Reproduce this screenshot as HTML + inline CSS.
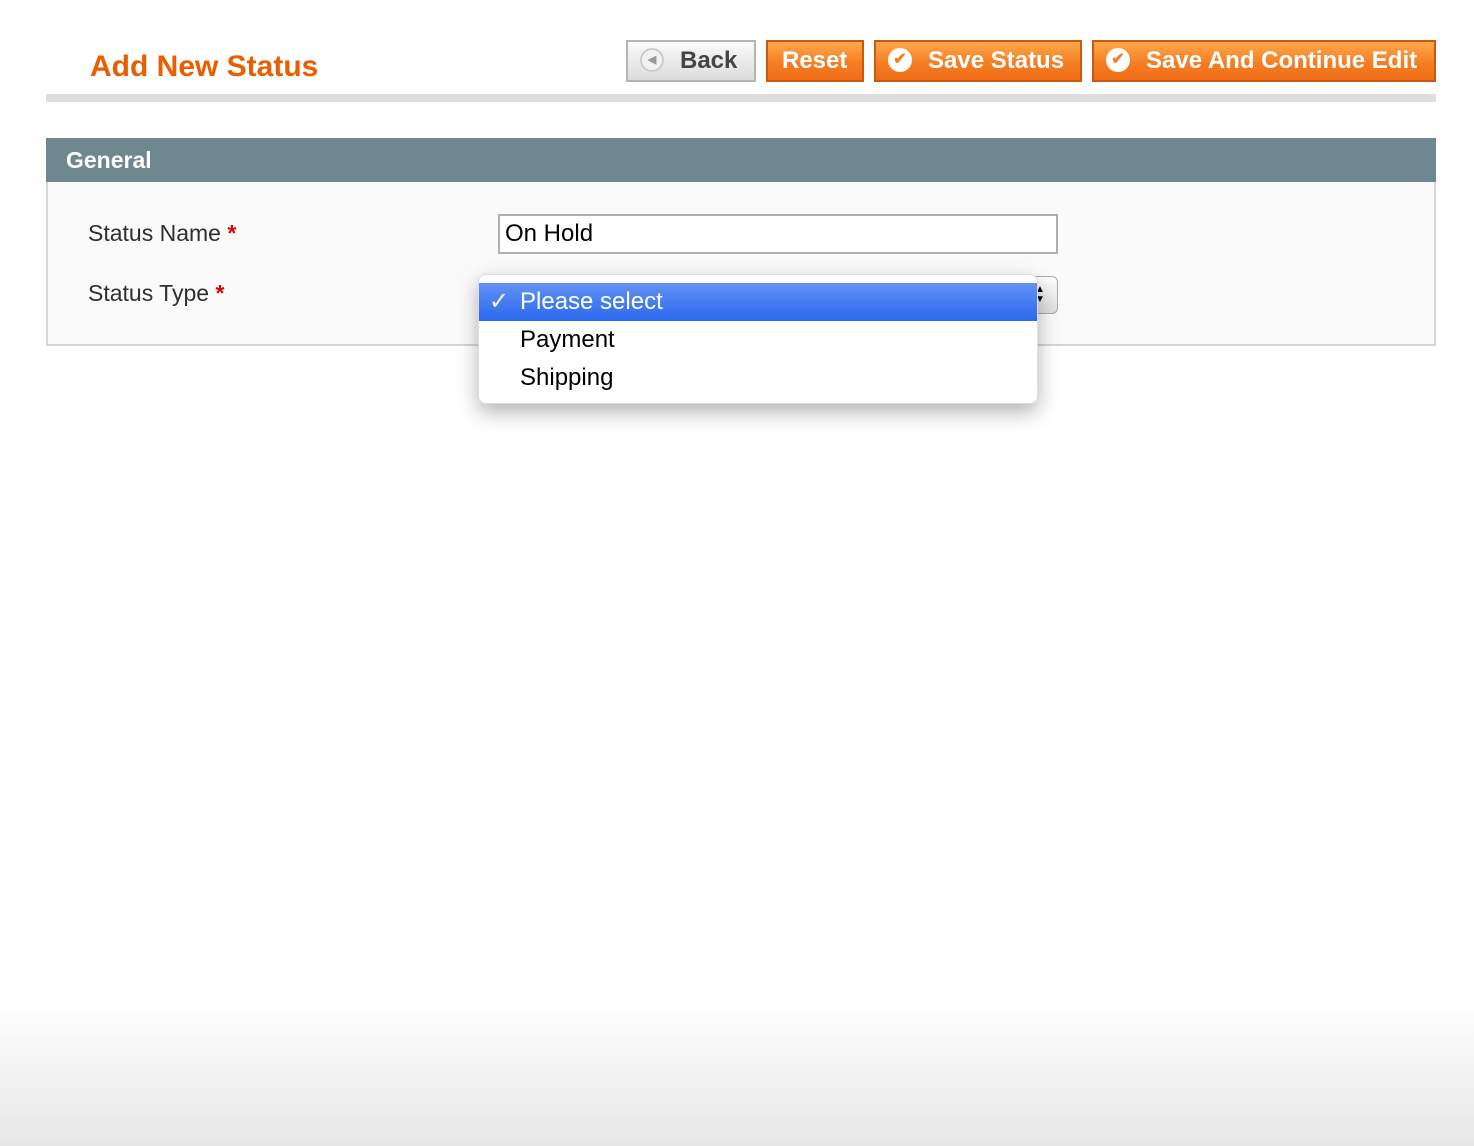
<!DOCTYPE html>
<html><head><style>
body{margin:0;width:1474px;height:1146px;position:relative;font-family:"Liberation Sans",sans-serif;background:linear-gradient(#fff 0,#fff 1000px,#e6e6e6 1146px);overflow:hidden}
.abs{position:absolute}
h1{position:absolute;left:90px;top:50px;margin:0;font-size:30px;color:#eb5e00;font-weight:bold}
.bar{left:46px;top:94px;width:1390px;height:8px;background:#dedede}
.btn{position:absolute;top:40px;height:42px;box-sizing:border-box;font-weight:bold;font-size:24px;line-height:38px;color:#fff;border:2px solid #c55a12;background:linear-gradient(#ffa84c,#f47e24 55%,#f06d16);white-space:nowrap}
.gray{border:2px solid #b5b5b5;background:linear-gradient(#fafafa,#dcdcdc);color:#444}
.ic{display:inline-block;width:24px;height:24px;border-radius:50%;background:#fff;vertical-align:middle;margin:-4px 16px 0 12px;color:#f47e24;font-size:16px;line-height:24px;text-align:center}
.head{left:46px;top:138px;width:1390px;height:44px;background:#6f878f;color:#fff;font-weight:bold;font-size:23px;line-height:44px;box-sizing:border-box;padding-left:20px}
.box{left:46px;top:182px;width:1390px;height:164px;box-sizing:border-box;border:2px solid #d6d6d6;border-top:none;background:#fafafa}
.lbl{font-size:23px;color:#2f2f2f}
.lbl b{color:#d40707}
.inp{left:498px;top:214px;width:560px;height:40px;box-sizing:border-box;border:2px solid #b0b0b0;background:#fff;font-size:24px;line-height:36px;padding-left:5px}
.sel{left:1030px;top:276px;width:28px;height:38px;border:1px solid #aaa;border-radius:6px;background:linear-gradient(#fff,#ddd);box-sizing:border-box}
.menu{left:478px;top:274px;width:560px;height:130px;background:#fff;border-radius:8px;box-shadow:0 8px 20px rgba(0,0,0,.3);border:1px solid #ddd;box-sizing:border-box}
.opt{position:absolute;left:0;width:558px;height:38px;font-size:24px;line-height:38px;padding-left:41px;box-sizing:border-box;color:#000}
.hl{background:linear-gradient(#6492f5,#2a68ee);color:#fff}
</style></head><body>
<h1>Add New Status</h1>
<div class="btn gray" style="left:626px;width:130px"><span class="ic" style="border:2px solid #ccc;width:20px;height:20px;line-height:20px;color:#999;font-size:11px;background:#f2f2f2">◀</span>Back</div>
<div class="btn" style="left:766px;width:98px;padding-left:14px">Reset</div>
<div class="btn" style="left:874px;width:208px"><span class="ic">✔</span>Save Status</div>
<div class="btn" style="left:1092px;width:344px"><span class="ic">✔</span>Save And Continue Edit</div>
<div class="abs bar"></div>
<div class="abs head">General</div>
<div class="abs box"></div>
<div class="abs lbl" style="left:88px;top:220px">Status Name <b>*</b></div>
<div class="abs lbl" style="left:88px;top:280px">Status Type <b>*</b></div>
<div class="abs inp">On Hold</div>
<div class="abs sel"><div class="abs" style="left:4px;top:8px;font-size:10px;line-height:10px">▲<br>▼</div></div>
<div class="abs menu">
<div class="opt hl" style="top:8px"><span class="abs" style="left:10px">✓</span>Please select</div>
<div class="opt" style="top:46px">Payment</div>
<div class="opt" style="top:84px">Shipping</div>
</div>
</body></html>
